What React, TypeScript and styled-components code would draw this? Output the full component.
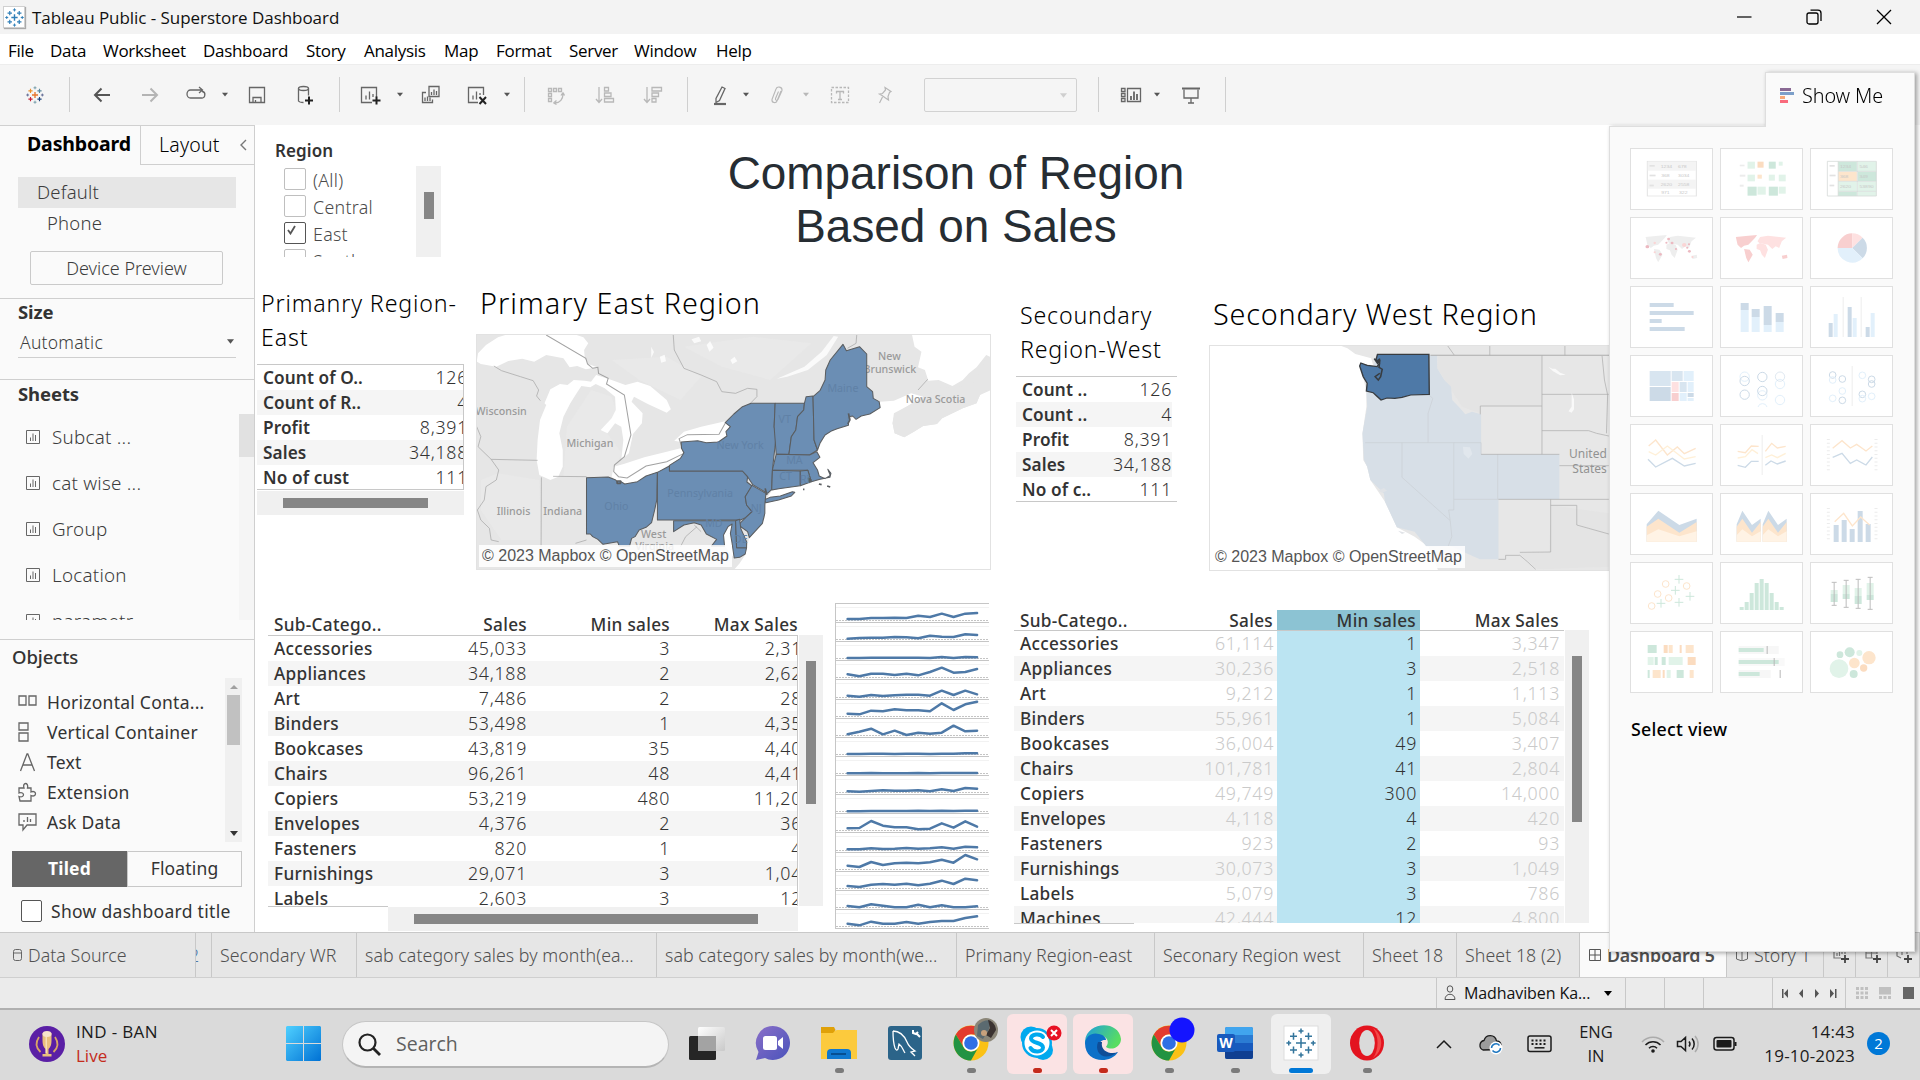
import React from "react";
import styled, { createGlobalStyle } from "styled-components";

const UI = '"Open Sans", "Noto Sans", sans-serif';
const TAB = '"Noto Sans", "Open Sans", sans-serif';
const ARIAL = '"Liberation Sans", Arial, sans-serif';

const Global = createGlobalStyle`
  *, *::before, *::after { box-sizing: border-box; }
  html, body { margin: 0; padding: 0; overflow: hidden; background: #fff; }
  body { font-family: ${UI}; color: #333; }
  svg { display: block; flex: none; }
`;

const Screen = styled.div`
  position: relative;
  width: 1920px;
  height: 1080px;
  display: flex;
  flex-direction: column;
  overflow: hidden;
  background: #fff;
`;

/* ---------- window chrome ---------- */

const TitleBar = styled.header`
  height: 34px;
  flex: none;
  display: flex;
  align-items: center;
  background: #f3f3f3;
  padding-left: 3px;
`;
const AppBadge = styled.span`
  width: 22px;
  height: 22px;
  background: #fff;
  border: 1px solid #d0d0d0;
  box-shadow: 1px 1px 1px #aaa;
  display: grid;
  place-items: center;
`;
const WindowTitle = styled.span`
  flex: 1;
  margin-left: 7px;
  font: 400 17px/35px ${UI};
  letter-spacing: -0.05px;
  color: #111;
`;
const WindowButtons = styled.div`
  display: flex;
  gap: 54px;
  margin-right: 28px;
`;

const MenuBar = styled.nav`
  height: 30px;
  flex: none;
  display: flex;
  background: #fff;
  padding-left: 8px;
`;
const MenuItem = styled.span<{ $w: number; $ls?: number }>`
  width: ${(p) => p.$w}px;
  flex: none;
  font: 400 17px/34px ${UI};
  letter-spacing: ${(p) => p.$ls ?? -0.3}px;
  color: #000;
  white-space: nowrap;
`;

const Toolbar = styled.div`
  height: 61px;
  flex: none;
  display: flex;
  align-items: center;
  background: #f5f5f5;
  border-top: 1px solid #ededed;
  padding-bottom: 1px;
`;
const Slot = styled.span<{ $gap: number; $w?: number }>`
  width: ${(p) => p.$w ?? 24}px;
  height: 24px;
  flex: none;
  margin-left: ${(p) => p.$gap}px;
  display: grid;
  place-items: center;
`;
const Divider = styled.span<{ $gap: number }>`
  width: 1px;
  height: 35px;
  flex: none;
  background: #cfcfcf;
  margin-left: ${(p) => p.$gap}px;
`;
const Combo = styled.span`
  width: 153px;
  height: 34px;
  flex: none;
  margin-left: 27px;
  margin-top: 1px;
  border: 1px solid #d2d2d2;
  border-radius: 2px;
  display: flex;
  align-items: center;
  justify-content: flex-end;
  padding-right: 9px;
`;

/* ---------- workspace ---------- */

const Workspace = styled.div`
  height: 807px;
  flex: none;
  display: flex;
`;
const Sidebar = styled.aside`
  width: 255px;
  flex: none;
  display: flex;
  flex-direction: column;
  background: #fafafa;
  border-top: 1px solid #d0d0d0;
  border-right: 1px solid #cfcfcf;
`;
const SideTabs = styled.div`
  height: 39px;
  flex: none;
  display: flex;
`;
const SideTab = styled.div<{ $active?: boolean }>`
  width: ${(p) => (p.$active ? 140 : 114)}px;
  display: flex;
  align-items: center;
  justify-content: space-between;
  padding: 0 7px ${(p) => (p.$active ? 3 : 1)}px ${(p) => (p.$active ? 27 : 18)}px;
  font: ${(p) => (p.$active ? 700 : 350)} 19.5px/36px ${TAB};
  letter-spacing: ${(p) => (p.$active ? -0.15 : 0.2)}px;
  color: #000;
  ${(p) => !p.$active && "border-left: 1px solid #cfcfcf; border-bottom: 1px solid #cfcfcf;"}
`;
const DeviceSection = styled.section`
  height: 134px;
  flex: none;
  display: flex;
  flex-direction: column;
  padding: 12px 18px 0 18px;
  border-bottom: 1px solid #cfcfcf;
`;
const DeviceRow = styled.div<{ $selected?: boolean }>`
  height: 31px;
  flex: none;
  background: ${(p) => (p.$selected ? "#e6e6e6" : "transparent")};
  padding-left: ${(p) => (p.$selected ? 19 : 29)}px;
  font: 350 18.5px/30px ${TAB};
  letter-spacing: 0.2px;
  color: #3c3c3c;
`;
const PreviewButton = styled.button`
  height: 34px;
  width: 193px;
  margin: 12px 0 0 12px;
  padding: 0;
  border: 1px solid #cacaca;
  border-radius: 2px;
  background: #fafafa;
  font: 350 18px/32px ${TAB};
  letter-spacing: 0;
  color: #3c3c3c;
`;
const SizeSection = styled.section`
  height: 81px;
  flex: none;
  padding: 0 18px;
  border-bottom: 1px solid #cfcfcf;
`;
const SideHeading = styled.h3<{ $lh: number; $mb: number; $w?: number }>`
  margin: 0 0 ${(p) => p.$mb}px;
  font: ${(p) => p.$w ?? 700} 18.5px/${(p) => p.$lh}px ${TAB};
  letter-spacing: -0.1px;
  color: #333;
`;
const SizeSelect = styled.div`
  height: 30px;
  border-bottom: 1px solid #cfcfcf;
  display: flex;
  align-items: center;
  justify-content: space-between;
  padding: 0 2px 2px;
  font: 350 17.5px/28px ${TAB};
  letter-spacing: 0.25px;
  color: #3c3c3c;
`;
const SheetsSection = styled.section`
  height: 260px;
  flex: none;
  border-bottom: 1px solid #cfcfcf;
  & > h3 { padding-left: 18px; }
`;
const SheetScroller = styled.div`
  height: 206px;
  display: flex;
  overflow: hidden;
`;
const SheetList = styled.div`
  flex: 1;
  display: flex;
  flex-direction: column;
`;
const SheetRow = styled.div`
  height: 46px;
  flex: none;
  display: flex;
  align-items: center;
  gap: 12px;
  padding-left: 26px;
  font: 350 18.8px/46px ${TAB};
  letter-spacing: 0.25px;
  color: #3c3c3c;
`;
const SheetTrack = styled.div`
  width: 15px;
  background: #f5f5f5;
  &::before { content: ""; display: block; height: 43px; background: #e1e1e1; }
`;
const ObjectsSection = styled.section`
  flex: 1;
  padding-left: 12px;
  display: flex;
  flex-direction: column;
`;
const ObjectsBody = styled.div`
  height: 164px;
  width: 230px;
  display: flex;
`;
const ObjectList = styled.div`
  flex: 1;
  padding-top: 9px;
`;
const ObjectRow = styled.div`
  height: 30px;
  display: flex;
  align-items: center;
  gap: 9px;
  padding-left: 5px;
  font: 400 17.5px/30px ${TAB};
  letter-spacing: 0.25px;
  color: #333;
  white-space: nowrap;
`;
const ObjectTrack = styled.div`
  width: 17px;
  background: #f0f0f0;
  display: flex;
  flex-direction: column;
  align-items: center;
  padding: 7px 0 6px;
`;
const ObjectThumb = styled.div`
  width: 13px;
  height: 50px;
  margin-top: 6px;
  margin-bottom: auto;
  background: #c1c1c1;
`;
const Toggle = styled.div`
  width: 230px;
  height: 36px;
  margin-top: 9px;
  display: flex;
`;
const ToggleItem = styled.span<{ $on?: boolean }>`
  flex: 1;
  text-align: center;
  background: ${(p) => (p.$on ? "#666" : "#fafafa")};
  border: 1px solid ${(p) => (p.$on ? "#666" : "#c8c8c8")};
  color: ${(p) => (p.$on ? "#fff" : "#333")};
  font: ${(p) => (p.$on ? 700 : 400)} 17.5px/33px ${TAB};
  letter-spacing: 0.15px;
`;
const TitleCheck = styled.label`
  margin: 13px 0 0 9px;
  display: flex;
  align-items: center;
  gap: 9px;
  font: 400 17.5px/22px ${TAB};
  letter-spacing: 0.3px;
  color: #333;
  white-space: nowrap;
`;
const Box = styled.span<{ $size?: number; $on?: boolean }>`
  width: ${(p) => p.$size ?? 22}px;
  height: 22px;
  flex: none;
  background: #fff;
  border: 1px solid ${(p) => (p.$on ? "#555" : "#bfbfbf")};
  border-radius: 2px;
`;

/* ---------- dashboard ---------- */

const Dashboard = styled.main`
  flex: 1;
  display: flex;
  flex-direction: column;
  background: #fff;
  overflow: hidden;
`;
const TopZone = styled.div`
  height: 160px;
  flex: none;
  display: flex;
`;
const Filter = styled.div`
  width: 186px;
  margin-left: 20px;
  padding-top: 14px;
`;
const FilterTitle = styled.div`
  font: 600 17px/24px ${TAB};
  letter-spacing: 0.1px;
  color: #333;
`;
const FilterBody = styled.div`
  height: 91px;
  margin-top: 3px;
  width: 166px;
  display: flex;
  justify-content: space-between;
  overflow: hidden;
`;
const FilterList = styled.div`
  padding-left: 9px;
  padding-top: 2px;
`;
const FilterRow = styled.div`
  height: 27px;
  display: flex;
  gap: 7px;
  font: 350 17.8px/25px ${TAB};
  letter-spacing: 0.3px;
  color: #4a4a4a;
  svg { margin: 2px; }
`;
const VTrack = styled.div<{ $w: number; $top: number; $len: number }>`
  width: ${(p) => p.$w}px;
  flex: none;
  background: #f0f0f0;
  display: flex;
  justify-content: center;
  padding-top: ${(p) => p.$top}px;
  &::before { content: ""; width: 10px; height: ${(p) => p.$len}px; background: #868686; }
`;
const HTrack = styled.div<{ $w: number; $ml?: number; $left: number; $len: number }>`
  width: ${(p) => p.$w}px;
  height: 24px;
  margin-left: ${(p) => p.$ml ?? 0}px;
  background: #f0f0f0;
  padding: 7px 0 0 ${(p) => p.$left}px;
  &::before { content: ""; display: block; width: ${(p) => p.$len}px; height: 10px; background: #868686; }
`;
const DashTitle = styled.h1`
  margin: 22px 0 0 180px;
  width: 630px;
  text-align: center;
  font: 400 45.9px/53px ${ARIAL};
  color: #262d33;
`;
const MiddleZone = styled.div`
  height: 305px;
  flex: none;
  display: flex;
`;
const KpiPanel = styled.div<{ $w: number; $pl: number; $top: number }>`
  width: ${(p) => p.$w}px;
  flex: none;
  padding-left: ${(p) => p.$pl}px;
  padding-top: ${(p) => p.$top}px;
`;
const KpiTitle = styled.h2<{ $pl: number; $ls: number; $mb: number }>`
  margin: 0 0 ${(p) => p.$mb}px;
  padding-left: ${(p) => p.$pl}px;
  font: 300 23.2px/34px ${TAB};
  letter-spacing: ${(p) => p.$ls}px;
  color: #000;
  white-space: nowrap;
`;
const KpiTable = styled.div<{ $w: number; $clipped?: boolean }>`
  width: ${(p) => p.$w}px;
  height: 126px;
  overflow: hidden;
  border-top: 1px solid #c8c8c8;
  border-bottom: 1px solid #c8c8c8;
  border-right: ${(p) => (p.$clipped ? "1px solid #c8c8c8" : "0")};
  margin-bottom: 1px;
`;
const KpiRow = styled.div<{ $over: number }>`
  height: 25px;
  display: flex;
  justify-content: space-between;
  padding-left: 6px;
  margin-right: ${(p) => -p.$over}px;
  font: 300 17.8px/25px ${TAB};
  letter-spacing: 0.7px;
  color: #333;
  &:nth-child(even) { background: #f5f5f5; }
  b { font-weight: 600; font-size: 17.2px; letter-spacing: 0.1px; }
`;
const MapPanel = styled.div<{ $w: number; $top: number }>`
  width: ${(p) => p.$w}px;
  flex: none;
  padding-top: ${(p) => p.$top}px;
`;
const MapTitle = styled.h2<{ $ls: number; $mb: number; $pl: number }>`
  margin: 0 0 ${(p) => p.$mb}px;
  padding-left: ${(p) => p.$pl}px;
  font: 350 28.8px/36px ${TAB};
  letter-spacing: ${(p) => p.$ls}px;
  color: #000;
  white-space: nowrap;
`;
const MapFrame = styled.div<{ $h: number }>`
  position: relative;
  height: ${(p) => p.$h}px;
  border: 1px solid #e2e2e2;
  overflow: hidden;
`;
const Attribution = styled.div`
  position: absolute;
  left: 2px;
  bottom: 2px;
  width: 253px;
  height: 22px;
  padding-left: 3px;
  background: rgba(255, 255, 255, 0.85);
  font: 400 16px/22px ${ARIAL};
  color: #555;
  white-space: nowrap;
`;
const BottomZone = styled.div`
  height: 342px;
  flex: none;
  display: flex;
`;
const DataPanel = styled.div<{ $w: number; $ml: number; $top: number }>`
  width: ${(p) => p.$w}px;
  flex: none;
  margin-left: ${(p) => p.$ml}px;
  padding-top: ${(p) => p.$top}px;
`;
const HeadRow = styled.div<{ $cols: string; $h: number }>`
  display: grid;
  grid-template-columns: ${(p) => p.$cols};
  height: ${(p) => p.$h}px;
  font: 500 17.2px/22px ${TAB};
  letter-spacing: 0.3px;
  color: #333;
`;
const HeadCell = styled.span<{ $num?: boolean; $on?: boolean; $pr?: number }>`
  text-align: ${(p) => (p.$num ? "right" : "left")};
  padding: 0 ${(p) => p.$pr ?? 0}px 0 ${(p) => (p.$num ? 0 : 6)}px;
  background: ${(p) => (p.$on ? "#8cc3d3" : "transparent")};
  white-space: nowrap;
`;
const DataBody = styled.div<{ $h: number }>`
  display: flex;
  gap: 1px;
  height: ${(p) => p.$h}px;
`;
const Rows = styled.div<{ $w: number; $edge?: boolean }>`
  width: ${(p) => p.$w}px;
  flex: none;
  overflow: hidden;
  border-top: 1px solid #c8c8c8;
  ${(p) => p.$edge && "border-right: 1px solid #c8c8c8;"}
`;
const DataRow = styled.div<{ $cols: string }>`
  height: 25px;
  display: grid;
  grid-template-columns: ${(p) => p.$cols};
  font: 300 17.8px/25px ${TAB};
  letter-spacing: 0.7px;
  &:nth-child(even) { background: #f5f5f5; }
`;
const Name = styled.span`
  padding-left: 6px;
  font-weight: 500;
  font-size: 17.2px;
  color: #333;
  letter-spacing: 0.3px;
`;
const Num = styled.span<{ $dim?: boolean; $on?: boolean; $pr?: number }>`
  text-align: right;
  padding-right: ${(p) => p.$pr ?? 0}px;
  color: ${(p) => (p.$dim ? "#cacaca" : "#333")};
  background: ${(p) => (p.$on ? "#bbe4f2" : "transparent")};
`;
const FootLine = styled.div<{ $w: number }>`
  width: ${(p) => p.$w}px;
  height: 1px;
  background: #c8c8c8;
`;

/* ---------- show me ---------- */

const ShowMe = styled.aside`
  position: absolute;
  left: 1609px;
  top: 72px;
  width: 306px;
  height: 880px;
  display: flex;
  flex-direction: column;
  filter: drop-shadow(2px 1px 2px rgba(0, 0, 0, 0.35));
`;
const ShowMeTab = styled.div`
  width: 150px;
  height: 55px;
  flex: none;
  align-self: flex-end;
  background: #fafafa;
  border: 1px solid #dedede;
  border-bottom: 0;
  margin-bottom: -1px;
  z-index: 1;
  display: flex;
  align-items: center;
  gap: 8px;
  padding: 0 0 9px 14px;
  font: 350 19.8px/44px ${TAB};
  letter-spacing: -0.1px;
  color: #000;
  white-space: nowrap;
`;
const ShowMeBody = styled.div`
  flex: 1;
  background: #fafafa;
  border: 1px solid #dedede;
  padding: 21px 0 0 20px;
`;
const CardGrid = styled.div`
  display: grid;
  grid-template-columns: repeat(3, 83px);
  grid-auto-rows: 62px;
  gap: 7px;
`;
const Card = styled.div`
  background: #fff;
  border: 1px solid #e0e0e0;
  svg { margin: -1px; }
`;
const SelectView = styled.div`
  margin-top: 22px;
  padding-left: 1px;
  font: 500 17.8px/28px ${TAB};
  letter-spacing: 0.25px;
  color: #000;
`;

/* ---------- bottom bars ---------- */

const TabStrip = styled.div`
  height: 46px;
  flex: none;
  display: flex;
  background: #e6e6e6;
  border-top: 1px solid #c8c8c8;
  border-bottom: 1px solid #cfcfcf;
`;
const SheetTab = styled.div<{ $w: number; $pl: number; $active?: boolean; $ls?: number }>`
  width: ${(p) => p.$w}px;
  flex: none;
  display: flex;
  align-items: center;
  overflow: hidden;
  border-right: 1px solid #c8c8c8;
  padding-left: ${(p) => p.$pl}px;
  gap: 6px;
  background: ${(p) => (p.$active ? "#fafafa" : "transparent")};
  font: ${(p) => (p.$active ? 600 : 350)} 17.8px/44px ${TAB};
  letter-spacing: ${(p) => p.$ls ?? 0.05}px;
  color: #505050;
  white-space: nowrap;
`;
const ScrolledLabel = styled.span`
  margin-left: -7px;
  color: #4e79a7;
`;
const StatusBar = styled.div`
  height: 32px;
  flex: none;
  display: flex;
  justify-content: flex-end;
  background: #ebebeb;
  border-bottom: 2px solid #b0b0b0;
`;
const StatusCell = styled.div<{ $w: number }>`
  width: ${(p) => p.$w}px;
  border-left: 1px solid #c8c8c8;
  display: flex;
  align-items: center;
  gap: 8px;
  padding-left: 7px;
  font: 400 16px/29px ${UI};
  letter-spacing: -0.1px;
  color: #111;
  white-space: nowrap;
`;
const UserName = styled.span`
  width: 132px;
`;

const Taskbar = styled.footer`
  height: 70px;
  flex: none;
  display: flex;
  align-items: center;
  background: #dadada;
  padding-bottom: 3px;
`;
const Widget = styled.div`
  width: 286px;
  padding-left: 29px;
  display: flex;
  align-items: center;
  gap: 11px;
  font: 400 17px/24px ${UI};
  letter-spacing: 0.35px;
  color: #1b1b1b;
`;
const Live = styled.div`
  color: #c42b1c;
  letter-spacing: 0;
`;
const SearchBox = styled.div`
  width: 327px;
  height: 47px;
  margin: 2px 0 0 21px;
  border: 1px solid #c6c6c6;
  border-bottom: 2px solid #b4b4b4;
  border-radius: 24px;
  background: #f4f4f4;
  display: flex;
  align-items: center;
  gap: 15px;
  padding-left: 15px;
  font: 400 19.5px/40px ${UI};
  color: #5f5f5f;
`;
const Apps = styled.div`
  display: flex;
  gap: 6px;
  align-self: flex-start;
  margin: 4px 0 0 8px;
`;
const AppSlot = styled.div<{ $bg?: string }>`
  width: 60px;
  height: 60px;
  border-radius: 6px;
  background: ${(p) => p.$bg ?? "transparent"};
  display: flex;
  flex-direction: column;
  align-items: center;
  padding-top: 11px;
  svg { overflow: visible; }
`;
const Pip = styled.span<{ $c: string; $w?: number }>`
  width: ${(p) => p.$w ?? 9}px;
  height: 5px;
  margin-top: 7px;
  border-radius: 3px;
  background: ${(p) => p.$c};
`;
const Tray = styled.div`
  margin-left: auto;
  display: flex;
  align-items: center;
  padding-right: 30px;
`;
const TrayText = styled.div<{ $w: number; $right?: boolean }>`
  width: ${(p) => p.$w}px;
  text-align: ${(p) => (p.$right ? "right" : "center")};
  font: 400 ${(p) => (p.$right ? 17 : 16.5)}px/24px ${UI};
  letter-spacing: ${(p) => (p.$right ? 0.2 : 0)}px;
  color: #1b1b1b;
  white-space: nowrap;
`;
const Count = styled.span`
  width: 23px;
  height: 23px;
  margin-left: 12px;
  border-radius: 50%;
  background: #0078d7;
  color: #fff;
  text-align: center;
  font: 400 15px/22px ${UI};
`;
const TrayIcon = styled.span<{ $w: number }>`
  width: ${(p) => p.$w}px;
  display: grid;
  place-items: center;
`;

/* ---------- small drawings ---------- */

const Caret = ({ c = "#555", w = 7 }: { c?: string; w?: number }) => (
  <svg width={w} height={5} viewBox="0 0 8 5"><path d="M0 0h8L4 5z" fill={c} /></svg>
);

const plus = (x: number, y: number, r: number) => `M${x - r} ${y}h${2 * r}M${x} ${y - r}v${2 * r}`;

const TableauMark = ({ size, mono }: { size: number; mono?: boolean }) => {
  const b = "#2f7fb8";
  const c = (v: string) => (mono ? b : v);
  return (
    <svg width={size} height={size} viewBox="0 0 24 24" fill="none" strokeWidth={1.5}>
      <path d={plus(12, 12, 4)} stroke={c("#e8762c")} strokeWidth={1.8} />
      <path d={plus(6, 6.5, 2.8)} stroke={c("#eb912c")} />
      <path d={plus(18, 6.5, 2.8)} stroke={c("#59879b")} />
      <path d={plus(6, 17.5, 2.8)} stroke={c("#c72035")} />
      <path d={plus(18, 17.5, 2.8)} stroke={c("#1f457e")} />
      <path d={plus(12, 2.4, 2)} stroke={c("#7199a6")} strokeWidth={1.2} />
      <path d={plus(12, 21.6, 2)} stroke={c("#7199a6")} strokeWidth={1.2} />
      <path d={plus(2.2, 12, 1.9)} stroke={c("#5b6591")} strokeWidth={1.2} />
      <path d={plus(21.8, 12, 1.9)} stroke={c("#5b6591")} strokeWidth={1.2} />
    </svg>
  );
};

const Ic = ({ children, c = "#666", w = 1.3 }: { children: React.ReactNode; c?: string; w?: number }) => (
  <svg width={24} height={24} viewBox="0 0 24 24" fill="none" stroke={c} strokeWidth={w}>{children}</svg>
);

const ToolbarRow = () => (
  <Toolbar>
    <Slot $gap={25} $w={19}><TableauMark size={18} /></Slot>
    <Divider $gap={25} />
    <Slot $gap={20}><Ic c="#555" w={2}><path d="M20 12H5M11.5 5.5L5 12l6.500 6.500" /></Ic></Slot>
    <Slot $gap={24}><Ic c="#b4b4b4" w={2}><path d="M4 12h15M12.500 5.500L19 12l-6.500 6.500" /></Ic></Slot>
    <Slot $gap={22}><Ic><path d="M8 15H6.500a3.500 4 0 0 1 0-8H18M15 4l3.500 3L15 10M18 8.500h.5a3 3.300 0 0 1-1 6.500H8" /></Ic></Slot>
    <Slot $gap={13} $w={8}><Caret w={6} /></Slot>
    <Slot $gap={16}><Ic><path d="M4.500 4.500h15v15h-15zM8 19.500v-5h8v5M10.500 17v2.500" /></Ic></Slot>
    <Slot $gap={24}><Ic><ellipse cx="10.500" cy="5.500" rx="5" ry="2" /><path d="M5.500 5.500v12.500c1 1.500 3 1.500 5 1.500M15.500 5.500v7" /><path d="M12 17.500h8M16 13.500v8" stroke="#222" strokeWidth="2" /></Ic></Slot>
    <Divider $gap={22} />
    <Slot $gap={19}><Ic><path d="M13 19.500H2.500v-15h15V14M7 16.500v-4M10.500 16.500V8.500M14 14v-3" /><path d="M13.500 17.500h8M17.500 13.500v8" stroke="#222" strokeWidth="2" /></Ic></Slot>
    <Slot $gap={13} $w={8}><Caret w={6} /></Slot>
    <Slot $gap={15}><Ic><path d="M10 3.500h10v10H10zM12.500 12V9M15 12V6.500M17.500 12V8M7 9.500H3.500v10h10V16.500M6 18v-3.500M8.500 18v-4.500M11 18v-3.500" /></Ic></Slot>
    <Slot $gap={23}><Ic><path d="M12 19.500H2.500v-15h15V12M7 16.500v-4M10.500 16.500V8.500M14 12V10" /><path d="M13.500 14l6.500 7M20 14l-6.500 7" stroke="#222" strokeWidth="2" /></Ic></Slot>
    <Slot $gap={13} $w={8}><Caret w={6} /></Slot>
    <Divider $gap={13} />
    <Slot $gap={19}><Ic c="#b8b8b8"><path d="M4.500 5.500h3v3h-3zM9.500 5.500h3v3h-3zM14.500 5.500h3v3h-3zM4.500 10.500h3v3h-3zM4.500 15.500h3v3h-3zM11 20c5 0 8-4 8-9M9.500 20l3-2.500M9.500 20l3 1.500M19 9.500l-2 3M19 9.500l1.500 3" /></Ic></Slot>
    <Slot $gap={25}><Ic c="#b8b8b8"><path d="M6 4v15M3 16l3 3.500L9 16M11.500 4.500h4v3.500h-4zM11.500 10h6.500v3.500h-6.500zM11.500 15.500h9v3.500h-9z" /></Ic></Slot>
    <Slot $gap={24}><Ic c="#b8b8b8"><path d="M6 4v15M3 16l3 3.500L9 16M11 4.500h9.500v3.500H11zM11 10h6.500v3.500H11zM11 15.500h4v3.500h-4z" /></Ic></Slot>
    <Divider $gap={22} />
    <Slot $gap={20}><Ic><path d="M14 4l3 1.500-5.500 12-3.500 2 0-4z" /><path d="M6 21h12" strokeWidth="2.200" /></Ic></Slot>
    <Slot $gap={10} $w={8}><Caret w={6} /></Slot>
    <Slot $gap={15}><Ic c="#b8b8b8" w={1.1}><path d="M16 8l-4 10c-1 2.500-5.500 2-5-1.500l4-10.500c1-3 6.500-2.500 6 1.500l-4 9c-1 1.500-3 1-2.500-1l3-7" /></Ic></Slot>
    <Slot $gap={13} $w={8}><Caret c="#b8b8b8" w={6} /></Slot>
    <Slot $gap={18}><Ic c="#b8b8b8"><rect x="3.500" y="4.500" width="17" height="15" strokeDasharray="2.500 1.500" /><path d="M8 8.500h8M12 8.500v8M10 16.500h4M8.500 8v2.500M15.500 8v2.500" /></Ic></Slot>
    <Slot $gap={21}><Ic c="#b8b8b8" w={1.2}><path d="M12 4.500l6 4-1.500 1-1.500 4 .5 3.500-3-2-3.500-2.500L6.500 11l3-.5 3-3.500zM9.500 14l-3 6" /></Ic></Slot>
    <Combo><Caret c="#cfcfcf" /></Combo>
    <Divider $gap={21} />
    <Slot $gap={20}><Ic><path d="M2.500 5.500h3.500v3H2.500zM2.500 10.500h3.500v3H2.500zM2.500 15.500h3.500v3H2.500zM8.500 5.500h13v13h-13z" /><path d="M12 17v-4M15 17V8.500M18 17v-6" strokeWidth="1.800" /></Ic></Slot>
    <Slot $gap={10} $w={8}><Caret w={6} /></Slot>
    <Slot $gap={18}><Ic><path d="M5 6.500v8.500h14V6.500M12 15v5M9 20h6" /><path d="M3 5.500h18" strokeWidth="2" /></Ic></Slot>
    <Divider $gap={22} />
  </Toolbar>
);

const SheetIcon = () => (
  <svg width={14} height={14} viewBox="0 0 14 14" fill="none" stroke="#666" strokeWidth={1}>
    <path d="M.5 .5h13v13H.5zM4.500 11V7.500M7 11V3.500M9.500 11V5" />
  </svg>
);

const ObjIcon = ({ d }: { d: string }) => (
  <svg width={21} height={22} viewBox="0 0 21 22" fill="none" stroke="#666" strokeWidth={1.3}><path d={d} /></svg>
);

const OBJECTS: [string, string][] = [
  ["Horizontal Conta...", "M2 5h7v9H2zM12 5h7v9h-7z"],
  ["Vertical Container", "M2 2h9v7H2zM2 12h9v8H2z"],
  ["Text", "M3.500 20L10 3h.8L17.500 20M6 14h9"],
  ["Extension", "M2 7h5c-2-6 5-6 3.500 0H14v4c6-2.500 6 6 0 3.500V20H3l-1-4.500c6 2 6-5.500 0-3.500z"],
  ["Ask Data", "M2 3h17v11H10l-4 5v-5H2zM7 11V9M10.500 11V6M13.500 11V8"],
];

const Side = () => (
  <Sidebar>
    <SideTabs>
      <SideTab $active>Dashboard</SideTab>
      <SideTab>
        Layout
        <svg width={7} height={12} viewBox="0 0 7 12" fill="none" stroke="#777" strokeWidth={1.4}><path d="M6 1L1 6l5 5" /></svg>
      </SideTab>
    </SideTabs>
    <DeviceSection>
      <DeviceRow $selected>Default</DeviceRow>
      <DeviceRow>Phone</DeviceRow>
      <PreviewButton>Device Preview</PreviewButton>
    </DeviceSection>
    <SizeSection>
      <SideHeading $lh={26} $mb={3}>Size</SideHeading>
      <SizeSelect>Automatic<Caret /></SizeSelect>
    </SizeSection>
    <SheetsSection>
      <SideHeading $lh={27} $mb={7}>Sheets</SideHeading>
      <SheetScroller>
        <SheetList>
          {["Subcat ...", "cat wise ...", "Group", "Location", "parametr"].map((s) => (
            <SheetRow key={s}><SheetIcon />{s}</SheetRow>
          ))}
        </SheetList>
        <SheetTrack />
      </SheetScroller>
    </SheetsSection>
    <ObjectsSection>
      <SideHeading $lh={34} $mb={4} $w={500}>Objects</SideHeading>
      <ObjectsBody>
        <ObjectList>
          {OBJECTS.map(([t, d]) => <ObjectRow key={t}><ObjIcon d={d} />{t}</ObjectRow>)}
        </ObjectList>
        <ObjectTrack>
          <svg width={8} height={4} viewBox="0 0 8 4"><path d="M0 4h8L4 0z" fill="#a0a0a0" /></svg>
          <ObjectThumb />
          <Caret c="#333" w={8} />
        </ObjectTrack>
      </ObjectsBody>
      <Toggle><ToggleItem $on>Tiled</ToggleItem><ToggleItem>Floating</ToggleItem></Toggle>
      <TitleCheck><Box $on $size={21} />Show dashboard title</TitleCheck>
    </ObjectsSection>
  </Sidebar>
);

/* ---------- maps ---------- */

const EAST_STATES = [
  "M367 593L430 591 452 600 458 608 466 604 478 612 515 605 540 588 573 577 571 660 565 690 556 728 540 742 520 750 508 770 498 775 492 798 462 798 457 785 440 788 415 793 400 778 385 770 378 762 367 762Z",
  "M573 577L608 558 608 573 820 573 835 590 833 606 848 618 828 650 832 675 848 695 830 712 815 720 573 720Z",
  "M608 573L608 556 640 535 650 518 643 505 642 486 690 482 715 488 750 486 775 468 772 455 785 440 770 428 795 402 820 380 845 370 915 370 912 440 918 468 907 570 905 628 893 640 888 637 850 614 835 590 820 573Z",
  "M888 668L882 660 900 652 930 648 965 635 972 637 962 648 925 660Z",
  "M915 370L1000 370 998 390 980 410 975 450 962 470 955 523 918 523 912 440Z",
  "M1000 370L1005 350 1025 348 1028 480 1038 510 1015 525 955 523 962 470 975 450 980 410 998 390Z",
  "M1025 350L1045 332 1060 300 1062 270 1075 240 1112 193 1122 212 1160 200 1181 222 1181 320 1198 335 1200 355 1217 365 1220 383 1190 402 1165 408 1150 418 1140 408 1128 410 1128 436 1095 446 1080 452 1060 465 1045 490 1038 510 1028 480Z",
  "M918 523L1015 525 1036 515 1045 532 1025 548 1038 570 1043 588 1060 596 1075 586 1068 568 1077 580 1074 592 1045 598 1020 605 1010 571 907 570Z",
  "M907 571L988 573 988 617 925 626 905 630Z",
  "M988 573L1010 571 1020 605 988 617Z",
  "M848 616L888 640 885 675 885 700 878 730 840 773 835 755 808 735 830 712 848 695 832 675 828 650Z",
  "M620 722L800 722 803 803 832 803 828 822 812 832 796 834 790 790 785 760 790 732 778 740 765 765 768 798 730 798 745 778 715 762 700 735 680 728 650 735 620 755Z",
  "M800 722L812 718 815 745 832 785 832 803 803 803Z",
];
const LABEL_LAND = "#9a9a9a";
const LABEL_STATE = "#6081a6";
const EAST_LABELS: [string, number, number, string][] = [
  ["Wisconsin", 119, 405, LABEL_LAND], ["Michigan", 377, 500, LABEL_LAND], ["Illinois", 155, 705, LABEL_LAND],
  ["Indiana", 298, 705, LABEL_LAND], ["West", 562, 774, LABEL_LAND], ["Virginia", 565, 809, LABEL_LAND],
  ["New", 1247, 240, LABEL_LAND], ["Brunswick", 1248, 278, LABEL_LAND], ["Nova Scotia", 1381, 370, LABEL_LAND],
  ["Maine", 1112, 335, LABEL_STATE], ["VT", 943, 429, LABEL_STATE], ["New York", 813, 507, LABEL_STATE],
  ["MA", 971, 551, LABEL_STATE], ["CT", 945, 600, LABEL_STATE], ["RI", 1002, 609, LABEL_STATE],
  ["Pennsylvania", 697, 650, LABEL_STATE], ["Ohio", 454, 689, LABEL_STATE], ["NJ", 860, 695, LABEL_STATE],
  ["MD", 737, 742, LABEL_STATE], ["DE", 815, 790, LABEL_STATE],
];

const MapSvg = styled.svg`
  margin: -1px;
`;

const EastMap = () => (
  <MapSvg width={515} height={236} viewBox="46 162 1496 708" preserveAspectRatio="none">
    <rect x="46" y="162" width="1496" height="708" fill="#e6e6e6" />
    <g fill="#e9e9e9">
      <path d="M380 330L440 350 455 400 420 450 470 520 440 590 300 588 310 440Z" />
      <path d="M60 600L110 580 230 600 235 780 120 780 60 690Z" />
      <path d="M650 200L850 170 1020 190 900 300 760 260Z" />
      <path d="M440 240L600 230 700 290 640 360 520 300Z" />
    </g>
    <g fill="#fff">
      <path d="M48 245L52 220 75 195 110 172 140 162 330 162 358 172 372 190 360 210 362 235 372 252 398 262 365 268 340 258 318 262 300 235 250 225 215 245 180 236 140 243 105 260 60 252Z" />
      <path d="M362 302L330 300 312 315 290 312 262 328 245 370 250 375 232 420 225 480 222 540 230 585 262 600 285 590 298 560 298 510 288 460 300 410 320 370 335 345 352 318 378 322 400 308Z" />
      <path d="M395 285L440 300 480 315 515 305 552 318 600 360 612 388 600 398 545 372 505 350 498 365 530 400 528 430 502 462 490 520 468 540 474 480 468 440 450 430 428 460 408 450 440 415 452 390 450 350 420 325 380 305Z" />
      <path d="M440 590L446 560 475 552 535 532 600 515 640 505 652 518 640 535 575 575 540 588 515 605 478 612 455 604Z" />
      <path d="M622 482L650 455 700 440 770 424 785 440 776 468 750 486 715 488 690 482 645 487Z" />
      <path d="M1312 162L1542 162 1542 232 1528 225 1500 262 1478 280 1460 300 1430 318 1390 300 1360 302 1350 270 1330 262 1340 215 1320 200Z" />
      <path d="M1542 330L1510 345 1500 370 1460 385 1400 415 1385 432 1345 438 1318 455 1290 472 1262 460 1256 430 1260 400 1300 378 1345 350 1310 340 1260 362 1220 365 1220 383 1190 402 1140 412 1095 446 1060 465 1038 512 1045 532 1028 548 1043 588 1062 596 1020 606 905 632 888 660 885 715 840 773 832 803 828 825 812 850 795 870 1542 870Z" />
      <path d="M920 296L1000 260 1050 215 1085 168 1098 170 1065 225 1010 270 950 290Z" opacity=".8" />
      <path d="M775 722L762 765 768 798 796 834 800 760 788 735Z" />
      <path d="M672 178l22-8 6 14-20 6zM716 195l10-12 10 20-12 12zM785 240l12-10 8 14-14 8zM555 200l8 16-8 18zM580 230l14-6 4 20-14 4z" opacity=".8" />
    </g>
    <path d="M1300 378L1345 350 1400 322 1470 320 1500 300 1528 232 1542 235 1542 320 1510 345 1500 370 1460 385 1400 415 1385 432 1345 438 1318 455 1290 472 1262 460 1256 430 1262 402Z" fill="#e6e6e6" />
    <g fill="none" stroke="#a2a2a2" strokeWidth={1}>
      <path d="M250 165L365 235 370 252 385 265 400 262 402 280 430 295 425 312 477 345 496 465 477 530 448 555 446 575 460 590 485 594 540 558 600 545 650 520 636 476 660 464 752 463 770 430" strokeWidth={3} />
      <path d="M98 258L120 272 175 290 212 302 228 330 222 348 233 362M48 440L60 470 52 500 90 538 225 541M90 538L112 570 105 600 75 620 70 660 50 690 60 720 85 745 90 780 112 785M236 592L235 800M270 589L367 590M335 790L367 780M619 165L622 210 650 265 700 285 745 305 760 335 800 340 835 325 862 328 862 350 845 368M1152 165L1150 190 1125 205M1358 298L1330 330M688 740L655 770 640 800M680 735L700 755" strokeWidth={2} />
    </g>
    <g fontFamily='"Noto Sans", sans-serif' fontSize={31} textAnchor="middle" fontWeight={500}>
      {EAST_LABELS.slice(0, 9).map(([t, x, y, c]) => <text key={t} x={x} y={y} fill={c}>{t}</text>)}
    </g>
    <g fill="#6b8eb4" stroke="#5a5d60" strokeWidth={3} strokeLinejoin="round">
      {EAST_STATES.map((d) => <path key={d} d={d} />)}
      <path d="M456 603h10v7h-10zM1012 595l6 4-4 8zM886 625l5 20M1042 612l8 2M1066 618l9 3M996 628l4 0M1128 400l4 20-6 12" strokeWidth={5} />
    </g>
    <g fontFamily='"Noto Sans", sans-serif' fontSize={31} textAnchor="middle">
      {EAST_LABELS.slice(9).map(([t, x, y, c]) => <text key={t} x={x} y={y} fill={c}>{t}</text>)}
    </g>
  </MapSvg>
);

const WestMap = () => (
  <MapSvg width={401} height={226} viewBox="530 195 1014 678" preserveAspectRatio="none">
    <rect x="530" y="195" width="1014" height="678" fill="#fff" />
    <path d="M858 195L1544 195 1544 873 1110 873 1085 800 1050 770 1005 742 975 665 938 600 930 560 920 540 918 460 928 380 928 335 912 250 945 256 940 235 900 222 880 205Z" fill="#e7e7e7" />
    <path d="M1110 226L1370 226 1370 378 1216 378 1216 400 1170 380 1107 265ZM1395 676L1541 700 1541 860 1360 868 1316 820 1390 815Z" fill="#e4e4e4" />
    <path d="M928 335L930 380 918 460 922 540 930 560 938 600 972 640 975 665 1005 742 1050 755 1080 800 1140 798 1215 838 1262 838 1262 658 1416 658 1416 523 1218 523 1218 403 1195 395 1178 403 1165 385 1145 360 1142 320 1125 300 1107 265 1107 226 955 224Z" fill="#d7dfe7" />
    <g fill="none" stroke="#cbd0d5" strokeWidth={2}>
      <path d="M925 488H1218V523M1084 343L1096 355 1084 400 1084 488M1018 488V592L1140 722M1149 488V690L1136 690 1140 722 1144 770 1135 798M1149 658H1262M1260 523V658" />
    </g>
    <g fill="none" stroke="#adadad" strokeWidth={2}>
      <path d="M1090 226H1544" strokeWidth={3} />
      <path d="M1240 195V226M1430 195V226M1132 195L1150 225M1216 403V378H1372M1372 226V523M1218 523H1416M1372 343H1541M1372 452H1490L1510 460 1541 468M1524 228L1530 300 1538 345 1535 460M1416 557H1541M1262 658H1541M1394 658V816L1316 817M1394 676H1460V735L1490 745 1541 762M1262 838H1280V826H1316L1335 845 1356 868" />
    </g>
    <path d="M1388 260l10 6 8 0 12 12 14 6-14 2-18-12zM1447 338l6 20 0 30-6 10-8-4 8-14z" fill="#fff" opacity=".75" />
    <path d="M1172 500l18 2 6 20-10 14-12-14z" fill="#fff" opacity=".25" />
    <path d="M958 632l14-8 8 8-12 6zM1008 752l18 6-8 4zM1028 775l10 4M1048 780l6 12" fill="#e0e3e7" />
    <path d="M956 223L1086 223 1087 343 1040 345 1018 352 1000 355 980 354 965 360 954 348 945 338 928 333 930 310 920 290 911 258 914 249 930 256 955 260 961 250 952 240Z" fill="#4e79a7" stroke="#383c40" strokeWidth={3.500} />
    <path d="M962 240L960 262 968 268 964 290 958 300 950 290 962 280M948 236l8 6 6-6-6 14z" fill="none" stroke="#383c40" strokeWidth={4} />
    <g fontFamily='"Noto Sans", sans-serif' fontSize={36} fill="#929292" textAnchor="end">
      <text transform="translate(1536 533) scale(.843 1)">United</text>
      <text transform="translate(1536 579) scale(.843 1)">States</text>
    </g>
  </MapSvg>
);

/* ---------- data ---------- */

const EAST_ROWS = [
  ["Accessories", "45,033", "3", "2,31"], ["Appliances", "34,188", "2", "2,62"], ["Art", "7,486", "2", "28"],
  ["Binders", "53,498", "1", "4,35"], ["Bookcases", "43,819", "35", "4,40"], ["Chairs", "96,261", "48", "4,41"],
  ["Copiers", "53,219", "480", "11,20"], ["Envelopes", "4,376", "2", "36"], ["Fasteners", "820", "1", "4"],
  ["Furnishings", "29,071", "3", "1,04"], ["Labels", "2,603", "3", "12"],
];
const WEST_ROWS = [
  ["Accessories", "61,114", "1", "3,347"], ["Appliances", "30,236", "3", "2,518"], ["Art", "9,212", "1", "1,113"],
  ["Binders", "55,961", "1", "5,084"], ["Bookcases", "36,004", "49", "3,407"], ["Chairs", "101,781", "41", "2,804"],
  ["Copiers", "49,749", "300", "14,000"], ["Envelopes", "4,118", "4", "420"], ["Fasteners", "923", "2", "93"],
  ["Furnishings", "30,073", "3", "1,049"], ["Labels", "5,079", "3", "786"], ["Machines", "42,444", "12", "4,800"],
];
const KPI_EAST = [["Count of O..", "126"], ["Count of R..", "4"], ["Profit", "8,391"], ["Sales", "34,188"], ["No of cust", "111"]];
const KPI_WEST = [["Count ..", "126"], ["Count ..", "4"], ["Profit", "8,391"], ["Sales", "34,188"], ["No of c..", "111"]];

/* Vertical units are thirds of a pixel, measured down from the panel's top. */
const SPARK_LINES = [70, 127, 184, 241, 298, 358, 415, 472, 529, 586, 643, 700, 757, 817, 874, 931, 988, 1045];
const SPARKS = [
  [117, 117, 114, 114, 113, 114, 107, 111, 101, 111, 101, 99],
  [176, 174, 173, 173, 171, 172, 175, 167, 170, 171, 163, 165],
  [234, 234, 233, 233, 233, 233, 233, 234, 231, 234, 231, 232],
  [283, 289, 281, 281, 285, 281, 286, 276, 263, 278, 276, 267],
  [347, 350, 345, 348, 346, 344, 344, 347, 332, 345, 332, 343],
  [401, 403, 392, 394, 388, 391, 391, 394, 370, 390, 373, 365],
  [463, 455, 446, 463, 452, 465, 458, 461, 458, 437, 454, 452],
  [522, 522, 521, 521, 522, 521, 521, 522, 521, 521, 520, 520],
  [580, 580, 579, 580, 580, 580, 579, 580, 579, 579, 579, 579],
  [634, 635, 633, 631, 632, 632, 631, 634, 628, 633, 624, 626],
  [694, 694, 693, 693, 693, 693, 692, 693, 692, 693, 692, 692],
  [745, 744, 723, 737, 742, 742, 748, 746, 730, 743, 724, 740],
  [808, 808, 805, 807, 806, 804, 806, 805, 802, 806, 800, 802],
  [857, 861, 846, 855, 850, 848, 850, 847, 839, 848, 825, 838],
  [918, 921, 914, 912, 914, 911, 916, 911, 902, 912, 896, 901],
  [978, 982, 973, 977, 982, 982, 974, 982, 976, 982, 982, 979],
  [1031, 1036, 1025, 1031, 1031, 1026, 1031, 1026, 1023, 1023, 1014, 1009],
];

const Sparklines = () => (
  <svg width={154} height={327} viewBox="0 0 154 327" fill="none">
    {SPARK_LINES.map((v, i) => {
      const y = Math.round((v - 70) / 3) + 0.5;
      return (
        <g key={v}>
          <path d={`M0 ${y}H154`} stroke="#c6c6c6" />
          {i < 17 && <path d={`M1 ${y + 4}H154`} stroke="#f2f2f2" />}
          {i > 0 && <path d={`M1 ${y - 2}H154`} stroke="#c4c4c4" strokeDasharray="2 1" />}
        </g>
      );
    })}
    <path d="M.5 0V326" stroke="#c6c6c6" />
    {SPARKS.map((s, i) => (
      <polyline key={i} points={s.map((v, k) => `${12.6 + k * 11.77},${(v - 69) / 3}`).join(" ")} stroke="#4e79a7" strokeWidth={2.500} strokeLinecap="round" strokeLinejoin="round" />
    ))}
  </svg>
);

/* ---------- show me cards ---------- */

const B1 = "#ccdae7", B2 = "#e2f0fb", O1 = "#fde5cc", G1 = "#cde7db", G2 = "#e1f3e9", O2 = "#fbdcc0", R1 = "#f8cfcf", R2 = "#fee1e1";
type R = [number, number, number, number, string];
const rects = (a: R[]) => a.map(([x, y, w, h, f], i) => <rect key={i} x={x} y={y} width={w} height={h} fill={f} />);
const line = (pts: string, c: string, w = 4) => <polyline key={pts} points={pts} fill="none" stroke={c} strokeWidth={w} />;
const ring = (x: number, y: number, c: string, r = 14) => <circle key={`${x}-${y}`} cx={x} cy={y} r={r} fill="none" stroke={c} strokeWidth={3} />;
const WORLD = [
  "M936 712L965 708 985 706 980 715 965 735 955 738 948 745 940 735Z",
  "M955 748L968 750 975 765 965 788 960 775Z",
  "M984 735L992 730 1005 735 1010 750 1003 775 996 765 992 752 984 748Z",
  "M986 725L992 712 1010 708 1052 714 1042 725 1036 745 1028 740 1020 748 1010 735 990 730Z",
  "M1042 768L1054 765 1055 775 1044 778Z",
];
const miniText = (t: string, x: number, y: number) => (
  <text key={t + x + y} x={x} y={y} fontSize={13} fill="#c8c8c8" fontFamily='"Liberation Sans", sans-serif' textLength={t.length * 6.500} lengthAdjust="spacingAndGlyphs">{t}</text>
);
const ticks = (x: number, y: number) => <path key={`t${x}`} d={`M${x} ${y}v94`} stroke="#ececec" strokeWidth={9} strokeDasharray="3 8.300" />;

const CARDS: React.ReactNode[] = [
  <>
    <rect x="940" y="485" width="113" height="104" fill="#fff" stroke="#e4e4e4" strokeWidth={2.500} />
    {rects([[941, 486, 111, 27, "#f4f4f4"], [941, 540, 111, 27, "#f4f4f4"], [945, 496, 12, 5, "#e2e2e2"], [945, 525, 14, 5, "#e2e2e2"], [945, 555, 10, 5, "#e2e2e2"]])}
    {miniText("1234", 971, 504)}{miniText("678", 1011, 504)}{miniText("368", 972, 531)}{miniText("3034", 1011, 531)}
    {miniText("2620", 971, 558)}{miniText("2558", 1011, 558)}{miniText("971", 972, 582)}{miniText("322", 1013, 582)}
  </>,
  rects([[1171, 486, 17, 21, G2], [1194, 486, 14, 18, O2], [1220, 486, 16, 21, G1], [1243, 486, 9, 12, G2], [1171, 525, 17, 20, G2], [1194, 525, 10, 12, O1], [1220, 525, 14, 18, G2], [1243, 525, 16, 20, G2], [1171, 561, 21, 27, G1], [1194, 561, 19, 24, G2], [1220, 561, 21, 27, G1], [1243, 561, 16, 21, G2], [1153, 495, 11, 5, "#ececec"], [1153, 525, 13, 6, "#ececec"], [1153, 555, 9, 6, "#ececec"]]),
  <>
    {rects([[1380, 486, 43, 28, G1], [1425, 486, 43, 28, G2], [1380, 516, 43, 28, O1], [1425, 516, 43, 28, G1], [1380, 546, 43, 28, G2], [1425, 546, 43, 28, G2], [1380, 576, 43, 13, G1], [1425, 576, 43, 13, G2], [1360, 496, 12, 5, "#e2e2e2"], [1360, 525, 14, 5, "#e2e2e2"], [1360, 555, 11, 5, "#e2e2e2"]])}
    <path d="M1355 485h113v104h-113zM1380 485v104M1424 485v104M1380 515h88M1380 545h88M1380 575h88" fill="none" stroke="#d4d9d6" strokeWidth={2} />
    {miniText("1234", 1384, 504)}{miniText("546", 1429, 504)}{miniText("368", 1384, 536)}{miniText("349", 1429, 536)}{miniText("2620", 1384, 565)}{miniText("53890", 1429, 565)}
  </>,
  <>
    {WORLD.map((d) => <path key={d} d={d} fill="#eee" />)}
    {[[940, 741, 5], [957, 730, 3.500], [989, 718, 4], [997, 730, 4], [1025, 736, 6], [1032, 744, 3], [1006, 748, 3], [957, 758, 3], [970, 764, 4], [1037, 755, 4], [1044, 772, 3], [984, 729, 3], [1036, 734, 3]].map(([x, y, r], i) => <ellipse key={i} cx={x} cy={y} rx={r * 0.85} ry={r} fill={i % 3 === 1 ? "#fad5d5" : "#ecb9c1"} />)}
  </>,
  <g transform="translate(208 0)">{WORLD.map((d, i) => <path key={d} d={d} fill={i === 2 || i === 3 ? R2 : R1} />)}</g>,
  <g transform="translate(1412.500 745) scale(.77 1)">
    <path d="M0 0L0 -44A44 44 0 0 0 -44 0Z" fill={R1} /><path d="M0 0L0 -44A44 44 0 0 1 31 -31Z" fill={R2} />
    <path d="M0 0L31 -31A44 44 0 0 1 31 31Z" fill={B1} /><path d="M0 0L31 31A44 44 0 0 1 -44 0Z" fill={B2} />
  </g>,
  rects([[150, 69, 72, 12, B1], [150, 93, 132, 12, B1], [150, 117, 36, 12, B1], [150, 141, 105, 12, B1]]),
  rects([[423, 69, 24, 21, B1], [423, 90, 24, 66, B2], [456, 87, 24, 24, B1], [456, 111, 24, 45, B2], [492, 78, 24, 57, B1], [492, 135, 24, 21, B2], [528, 99, 24, 27, B1], [528, 126, 24, 30, B2]]),
  rects([[687, 129, 12, 42, B1], [702, 102, 12, 69, B2], [744, 81, 12, 90, B1], [759, 114, 12, 57, B2], [798, 141, 12, 30, B1], [813, 99, 12, 72, B2], [729, 51, 3, 120, "#ededed"], [783, 51, 3, 120, "#ededed"]]),
  rects([[150, 273, 63, 45, "#d8e5f0"], [150, 321, 63, 42, B1], [216, 273, 33, 30, "#d8e5f0"], [252, 273, 30, 30, B2], [216, 306, 21, 30, R2], [216, 339, 21, 24, R1], [240, 306, 21, 30, "#d8e5f0"], [264, 306, 18, 30, B2], [240, 339, 21, 24, B2], [264, 339, 18, 12, B1], [264, 354, 18, 9, B2]]),
  <>
    {ring(435, 290, B2)}{ring(435, 303, B1)}{ring(435, 344, B1)}{ring(488, 291, B1)}{ring(488, 346, B2)}{ring(488, 333, B1)}{ring(541, 312, B2)}{ring(541, 290, B1 + "99")}{ring(541, 360, B2)}
    <path d="M475 381a14 14 0 0 1 27 0" fill="none" stroke={B2} strokeWidth={3} />
  </>,
  <>
    {ring(699, 285, B1, 10)}{ring(699, 300, B2, 10)}{ring(728, 297, B1, 10)}{ring(728, 333, B2, 10)}{ring(699, 355, B2, 10)}{ring(728, 361, B1, 10)}{ring(788, 286, B2, 10)}{ring(816, 298, B1, 10)}{ring(816, 312, B1, 10)}{ring(788, 343, B1, 10)}{ring(788, 356, B2, 10)}{ring(816, 349, B2, 10)}
    <rect x="756" y="258" width="3" height="120" fill="#ededed" />
  </>,
  <>{line("147,498 168,480 203,525 233,501 254,521 288,505", O1)}{line("147,515 168,525 203,498 254,537 288,530", "#fff0d8")}{line("145,538 168,561 218,535 254,558 288,550", B1)}</>,
  <>{line("414,514 437,518 455,498 477,499", O1)}{line("497,514 516,490 533,504 558,499", O1)}{line("414,534 437,530 457,509 475,521", "#fff0d8")}{line("497,533 516,525 533,533 558,520", "#fff0d8")}{line("414,556 437,562 455,544 477,544", B1)}{line("497,556 514,543 533,552 558,543", B1)}<rect x="486" y="465" width="3" height="120" fill="#ededed" /></>,
  <>{line("699,505 727,482 752,504 771,493 799,513 818,498", O1)}{line("699,532 727,520 752,550 771,540 799,555 818,531", B1)}{ticks(686, 477)}{ticks(829, 477)}</>,
  <><path d="M141 733L176 692 239 735 291 716V785H141Z" fill={B1} /><path d="M141 740L176 716 239 758 291 726V785H141Z" fill={O1} /><path d="M141 766L176 748 239 769 291 754V785H141Z" fill="#fff3e5" /></>,
  <>{[0, 78].map((o) => <g key={o} transform={`translate(${o} 0)`}><path d="M411 733L428 692 457 735 483 716V785H411Z" fill={B1} /><path d="M411 740L428 716 457 758 483 726V785H411Z" fill={O1} /><path d="M411 766L428 748 457 769 483 754V785H411Z" fill="#fff3e5" /></g>)}</>,
  <>{rects([[702, 735, 15, 51, B1], [726, 720, 15, 66, B1], [750, 747, 15, 39, B1], [774, 693, 15, 93, B1], [798, 732, 15, 54, B1]])}{line("705,725 732,700 758,738 783,711 810,735", O1)}{ticks(686, 684)}{ticks(829, 684)}</>,
  <>{ring(198, 912, O1, 10)}{ring(261, 918, O1, 10)}{ring(174, 942, O1, 10)}{ring(207, 954, O1, 10)}{ring(156, 978, O1, 10)}<path d={[[238, 898], [227, 931], [271, 949], [238, 967], [184, 970]].map(([x, y]) => plus(x, y, 13)).join("")} stroke={G1} strokeWidth={3} /></>,
  rects([[420, 981, 12, 9, G1], [435, 966, 12, 24, G1], [450, 939, 12, 51, G1], [465, 909, 12, 81, G1], [480, 897, 12, 93, G1], [495, 909, 12, 81, G1], [510, 939, 12, 51, G1], [525, 966, 12, 24, G1], [540, 981, 12, 9, G1]]),
  <>{rects([[693, 930, 21, 12, G2], [693, 942, 21, 24, G1], [729, 915, 21, 27, G2], [729, 942, 21, 15, G1], [765, 924, 21, 24, G2], [765, 948, 21, 24, G1], [801, 909, 21, 36, G2], [801, 945, 21, 15, G1]])}<path d="M696 907h15M703.500 907v69M696 976h15M732 901h15M739.500 901v81M732 982h15M768 898h15M775.500 898v87M768 985h15M804 892h15M811.500 892v96M804 988h15" stroke="#bdbdbd" strokeWidth={3} /></>,
  rects([[144, 1095, 27, 24, G1], [192, 1095, 12, 24, O2], [207, 1095, 12, 24, O1], [240, 1095, 6, 24, O2], [258, 1095, 24, 24, O1], [144, 1131, 18, 24, G2], [165, 1131, 9, 24, G1], [186, 1131, 12, 24, G1], [207, 1131, 42, 24, G2], [264, 1131, 24, 24, O2], [144, 1170, 6, 24, G1], [159, 1170, 24, 24, O1], [189, 1170, 6, 24, O2], [201, 1170, 12, 24, G2], [231, 1170, 21, 24, G1], [270, 1170, 12, 24, O1]]),
  rects([[417, 1098, 120, 24, "#f7f7f7"], [417, 1104, 75, 12, G1], [501, 1098, 3, 24, "#b8b8b8"], [417, 1134, 138, 24, "#f9f9f9"], [417, 1140, 120, 12, G1], [522, 1134, 3, 24, "#b8b8b8"], [417, 1170, 96, 24, "#f7f7f7"], [417, 1176, 63, 12, G1], [540, 1170, 3, 24, "#b8b8b8"]]),
  <>{([[718, 1166, 28, G2], [721, 1124, 10, G1], [750, 1117, 15, G1], [779, 1119, 9, G2], [808, 1133, 20, O1], [764, 1149, 16, O1], [792, 1164, 11, O2], [762, 1182, 12, G1]] as [number, number, number, string][]).map(([x, y, r, c]) => <circle key={x} cx={x} cy={y} r={r} fill={c} />)}</>,
];

const cardBox = (i: number) => {
  const c = i % 3;
  const r = Math.floor(i / 3);
  return r < 2 ? `${900 + c * 207.5} ${445 + r * 207} 191.400 186` : `${91 + c * 270} ${18 + (r - 2) * 207} 249 186`;
};

const ShowMePanel = () => (
  <ShowMe>
    <ShowMeTab>
      <svg width={14} height={15} viewBox="0 0 14 15">{rects([[0, 0, 11, 3, "#8a6a94"], [0, 4, 14, 3, "#7c9fc9"], [0, 8, 5, 3, "#f7a878"], [0, 12, 8, 3, "#f96a7c"]])}</svg>
      Show Me
    </ShowMeTab>
    <ShowMeBody>
      <CardGrid>
        {CARDS.map((n, i) => (
          <Card key={i}><svg width={83} height={62} viewBox={cardBox(i)} preserveAspectRatio="none">{n}</svg></Card>
        ))}
      </CardGrid>
      <SelectView>Select view</SelectView>
    </ShowMeBody>
  </ShowMe>
);

/* ---------- taskbar drawings ---------- */

const Chrome = () => (
  <>
    <circle cx="18" cy="18" r="17.500" fill="#fbc116" />
    <path d="M2.800 9.500A17.500 17.500 0 0 1 33.200 9.500H18A8.500 8.500 0 0 0 10.600 22.200Z" fill="#e33b2e" />
    <path d="M2.800 9.500A17.500 17.500 0 0 0 18 35.500L25.400 22.200A8.500 8.500 0 0 1 10.600 22.200Z" fill="#229342" />
    <circle cx="18" cy="18" r="8.500" fill="#fff" /><circle cx="18" cy="18" r="6.800" fill="#2f6fe4" />
  </>
);
const GRAY = "#7b7b7b", RED = "#c42b1c";
const A = ({ children }: { children: React.ReactNode }) => <svg width={36} height={36} viewBox="0 0 36 36">{children}</svg>;

const TaskApps = () => (
  <Apps>
    <AppSlot><A><defs><linearGradient id="tv" x2="1" y2="1"><stop offset="0" stopColor="#fff" /><stop offset="1" stopColor="#c9c9c9" /></linearGradient></defs><rect x="0" y="11" width="27" height="24" rx="1.500" fill="#262626" /><rect x="9" y="2" width="27" height="24" rx="1.500" fill="url(#tv)" /><path d="M9 11h18v15H9z" fill="#a3a3a3" /></A></AppSlot>
    <AppSlot><A><defs><linearGradient id="ch" x2="1" y2="1"><stop offset="0" stopColor="#8a6fc8" /><stop offset="1" stopColor="#4a53bb" /></linearGradient></defs><path d="M18 1a17 17 0 1 1-8 32L1 35l2.500-8A17 17 0 0 1 18 1z" fill="url(#ch)" /><rect x="8" y="11" width="14" height="14" rx="2.500" fill="#fff" /><path d="M23 16l5-4v12l-5-4z" fill="#fff" /></A></AppSlot>
    <AppSlot><A><path d="M0 6h13l3-1h20v29H0z" fill="#fcca3d" /><path d="M0 2h13l1.500 3L12 8H0z" fill="#e0a108" /><path d="M6 34v-6a4 4 0 0 1 4-4h16a4 4 0 0 1 4 4v6z" fill="#1078cf" /><path d="M10 29h15" stroke="#064f92" strokeWidth="2" /></A><Pip $c={GRAY} /></AppSlot>
    <AppSlot><A><rect x="1" y="1" width="34" height="34" rx="3" fill="#2b6489" /><path d="M6 6c7 0 11 4 14 11 2 5 5 7 8 9l-4 1 4 4M6 6c0 5 0 11 2 17 1 2 2 3 3 1l1-5c3 2 4 6 6 9" fill="none" stroke="#fff" strokeWidth="1.300" /><path d="M26 5l0 3 3 1 2-2M29 8l4 4" stroke="#fff" strokeWidth="2" fill="none" /></A></AppSlot>
    <AppSlot><A><Chrome /><circle cx="33" cy="5" r="12" fill="#8b8678" /><path d="M25 0c4-4 10-6 13-4l-2 8-6 10-6-3z" fill="#5b6a70" /><path d="M35-5c5 1 8 6 8 10l-5 8-5-3 4-7z" fill="#3a3230" /><circle cx="31" cy="8" r="3" fill="#c8a17c" /></A><Pip $c={GRAY} /></AppSlot>
    <AppSlot $bg="#fbe3e4"><A><circle cx="12" cy="12" r="10.500" fill="#00a9ee" /><circle cx="24" cy="25" r="10" fill="#00a9ee" /><circle cx="18" cy="18" r="15" fill="#00a9ee" /><circle cx="18" cy="18" r="12.500" fill="#fff" /><path d="M24 12c-3-4-12-3-12 1.500 0 5 12 3.500 12 9 0 5-10 5.500-12.500.5" fill="none" stroke="#00a9ee" strokeWidth="4" strokeLinecap="round" /><circle cx="35" cy="8" r="7.500" fill="#e81123" /><path d="M32 5l6 6M38 5l-6 6" stroke="#fff" strokeWidth="2" /></A><Pip $c={RED} /></AppSlot>
    <AppSlot $bg="#fbe3e4"><A><defs><linearGradient id="eg" x2="1" y2=".4"><stop offset="0" stopColor="#1d9de0" /><stop offset="1" stopColor="#58dd61" /></linearGradient></defs><path d="M0 16C2-4 34-5 36 14c0 8-9 12-15 8 4-5 1-11-5-11C9 11 2 13 0 20z" fill="url(#eg)" /><path d="M0 18c1-7 7-11 14-9 5 1 7 4 7 6-9-1-8 10 0 13 6 2 10 0 12-1C26 39 0 39 0 18z" fill="#0c70c8" /><path d="M13 17c-4 10 5 21 20 10-6 3-18 0-16-10z" fill="#0f4d97" /></A><Pip $c={RED} /></AppSlot>
    <AppSlot><A><Chrome /><circle cx="31" cy="5" r="12.500" fill="#1414ff" /></A><Pip $c={GRAY} /></AppSlot>
    <AppSlot><A><rect x="8" y="2" width="28" height="32" rx="2" fill="#2b7cd3" /><path d="M8 4a2 2 0 0 1 2-2h24a2 2 0 0 1 2 2v6H8z" fill="#41a5ee" /><path d="M8 18h28v8H8z" fill="#185abd" /><path d="M8 26h28v6a2 2 0 0 1-2 2H10a2 2 0 0 1-2-2z" fill="#103f91" /><rect x="0" y="9" width="18" height="18" rx="2" fill="#185abd" /><text x="9" y="23" fill="#fff" fontSize="14" fontWeight="700" textAnchor="middle" fontFamily="Open Sans, sans-serif">W</text></A><Pip $c={GRAY} /></AppSlot>
    <AppSlot $bg="#efefef"><A><rect x="1" y="1" width="34" height="34" fill="#fff" stroke="#ddd" /><svg x="3" y="3" width="30" height="30" viewBox="0 0 24 24"><path d={plus(12, 12, 4) + plus(6, 6.500, 2.800) + plus(18, 6.500, 2.800) + plus(6, 17.500, 2.800) + plus(18, 17.500, 2.800) + plus(12, 2.400, 2) + plus(12, 21.600, 2) + plus(2.200, 12, 1.900) + plus(21.800, 12, 1.900)} stroke="#33759c" strokeWidth="1.200" /></svg></A><Pip $c="#0078d7" $w={24} /></AppSlot>
    <AppSlot><A><ellipse cx="18" cy="18" rx="17" ry="17.500" fill="#e3141f" /><path d="M24 3a17 17.500 0 0 1 0 30 17 22 0 0 0 0-30z" fill="#f24a4a" /><ellipse cx="18" cy="18" rx="7.800" ry="13" fill="#dadada" /></A><Pip $c={GRAY} /></AppSlot>
  </Apps>
);

const T = (p: { w: number; h: number; children: React.ReactNode; sw?: number }) => (
  <svg width={p.w} height={p.h} viewBox={`0 0 ${p.w} ${p.h}`} fill="none" stroke="#1b1b1b" strokeWidth={p.sw ?? 1.500}>{p.children}</svg>
);

const TaskTray = () => (
  <Tray>
    <TrayIcon $w={32}><T w={16} h={10}><path d="M1 9l7-7 7 7" /></T></TrayIcon>
    <TrayIcon $w={62}><T w={26} h={22}><path d="M5 17a5 5 0 0 1 1-9.500C8 1 17 1 18.500 8c5 0 6 6 3 8.500z" fill="#9c9c9c" strokeWidth={1.300} /><circle cx="18" cy="15" r="6.500" fill="#fff" stroke="none" /><path d="M13.500 15a4.500 4.500 0 0 1 8-2.500M22.500 15a4.500 4.500 0 0 1-8 2.500" stroke="#1f77c0" /></T></TrayIcon>
    <TrayIcon $w={34}><T w={25} h={18}><rect x="1" y="1" width="23" height="15.500" rx="2" /><path d="M4.500 5.500h16M4.500 9h16" strokeDasharray="2 2" strokeWidth={2} /><path d="M7.500 12.800h10" /></T></TrayIcon>
    <TrayText $w={80}>ENG<br />IN</TrayText>
    <TrayIcon $w={34}><T w={24} h={20}><path d="M1 8a15 15 0 0 1 22 0" stroke="#ababab" /><path d="M4.500 11a10.500 10.500 0 0 1 15 0M8 14.300a5.500 5.500 0 0 1 8 0" /><circle cx="12" cy="17" r="1.800" fill="#1b1b1b" stroke="none" /></T></TrayIcon>
    <TrayIcon $w={36}><T w={24} h={20}><path d="M1.500 7.500v5h3.500l4.500 4V3.500L5 7.500zM13 7.500a4 4 0 0 1 0 5M16 4.500a8 8 0 0 1 0 11" /><path d="M19 2a12 12 0 0 1 0 16" stroke="#ababab" /></T></TrayIcon>
    <TrayIcon $w={38}><T w={24} h={16}><rect x="1" y="1.500" width="20" height="12.500" rx="2.500" /><rect x="3.500" y="4" width="15" height="7.500" rx="1" fill="#1b1b1b" stroke="none" /><path d="M22.500 6v4" strokeWidth={2} /></T></TrayIcon>
    <TrayText $w={111} $right>14:43<br />19-10-2023</TrayText>
    <Count>2</Count>
  </Tray>
);

const NewTab = ({ d }: { d: string }) => (
  <svg width={16} height={18} viewBox="0 0 16 18" fill="none" stroke="#777" strokeWidth={1.200}><path d={d} /><path d="M8 13h8M12 9v8" stroke="#444" strokeWidth={1.800} /></svg>
);

const NavArrows = styled.svg`
  margin-left: 1px;
`;
const ViewModes = styled.svg`
  margin-left: 3px;
`;

const EAST_COLS = "120px 139px 143px 132px";
const WEST_COLS = "120px 143px 143px 144px";

export default function App() {
  return (
    <Screen>
      <Global />
      <TitleBar>
        <AppBadge><TableauMark size={19} mono /></AppBadge>
        <WindowTitle>Tableau Public - Superstore Dashboard</WindowTitle>
        <WindowButtons>
          <svg width={16} height={16} viewBox="0 0 16 16" stroke="#000"><path d="M1 8h14.500" strokeWidth={1.200} /></svg>
          <svg width={16} height={16} viewBox="0 0 16 16" fill="none" stroke="#000" strokeWidth={1.300}><rect x="1" y="4" width="11" height="11" rx="2" /><path d="M4.500 1.200H12a3 3 0 0 1 3 3V12" /></svg>
          <svg width={16} height={16} viewBox="0 0 16 16" stroke="#000" strokeWidth={1.300}><path d="M1 1l14 14M15 1L1 15" /></svg>
        </WindowButtons>
      </TitleBar>
      <MenuBar>
        <MenuItem $w={42}>File</MenuItem><MenuItem $w={53}>Data</MenuItem><MenuItem $w={100}>Worksheet</MenuItem>
        <MenuItem $w={103}>Dashboard</MenuItem><MenuItem $w={58}>Story</MenuItem><MenuItem $w={80}>Analysis</MenuItem>
        <MenuItem $w={52}>Map</MenuItem><MenuItem $w={73}>Format</MenuItem><MenuItem $w={65}>Server</MenuItem>
        <MenuItem $w={82}>Window</MenuItem><MenuItem $w={50}>Help</MenuItem>
      </MenuBar>
      <ToolbarRow />
      <Workspace>
        <Side />
        <Dashboard>
          <TopZone>
            <Filter>
              <FilterTitle>Region</FilterTitle>
              <FilterBody>
                <FilterList>
                  {["(All)", "Central", "East", "South"].map((r) => (
                    <FilterRow key={r}>
                      <Box $on={r === "East"}>
                        {r === "East" && <svg width={10} height={10} viewBox="0 0 10 10" fill="none" stroke="#555" strokeWidth={1.800}><path d="M1 5l2.500 3.500L8 1" /></svg>}
                      </Box>
                      {r}
                    </FilterRow>
                  ))}
                </FilterList>
                <VTrack $w={25} $top={26} $len={27} />
              </FilterBody>
            </Filter>
            <DashTitle>Comparison of Region<br />Based on Sales</DashTitle>
          </TopZone>
          <MiddleZone>
            <KpiPanel $w={221} $pl={2} $top={1}>
              <KpiTitle $pl={4} $ls={0.850} $mb={10}>Primanry Region-<br />East</KpiTitle>
              <KpiTable $w={207} $clipped>
                {KPI_EAST.map(([k, v]) => <KpiRow key={k} $over={5}><b>{k}</b>{v}</KpiRow>)}
              </KpiTable>
              <HTrack $w={207} $left={26} $len={145} />
            </KpiPanel>
            <MapPanel $w={515} $top={0}>
              <MapTitle $pl={4} $ls={1} $mb={13}>Primary East Region</MapTitle>
              <MapFrame $h={236}><EastMap /><Attribution>© 2023 Mapbox © OpenStreetMap</Attribution></MapFrame>
            </MapPanel>
            <KpiPanel $w={218} $pl={25} $top={13}>
              <KpiTitle $pl={4} $ls={0.800} $mb={10}>Secoundary<br />Region-West</KpiTitle>
              <KpiTable $w={161}>
                {KPI_WEST.map(([k, v], i) => <KpiRow key={i} $over={-5}><b>{k}</b>{v}</KpiRow>)}
              </KpiTable>
            </KpiPanel>
            <MapPanel $w={401} $top={11}>
              <MapTitle $pl={4} $ls={0.800} $mb={13}>Secondary West Region</MapTitle>
              <MapFrame $h={226}><WestMap /><Attribution>© 2023 Mapbox © OpenStreetMap</Attribution></MapFrame>
            </MapPanel>
          </MiddleZone>
          <BottomZone>
            <DataPanel $w={555} $ml={13} $top={24}>
              <HeadRow $cols={EAST_COLS} $h={21}>
                <HeadCell>Sub-Catego..</HeadCell><HeadCell $num>Sales</HeadCell><HeadCell $num>Min sales</HeadCell><HeadCell $num $pr={4}>Max Sales</HeadCell>
              </HeadRow>
              <DataBody $h={271}>
                <Rows $w={530} $edge>
                  {EAST_ROWS.map((r) => (
                    <DataRow key={r[0]} $cols={EAST_COLS}><Name>{r[0]}</Name><Num>{r[1]}</Num><Num>{r[2]}</Num><Num>{r[3]}</Num></DataRow>
                  ))}
                </Rows>
                <VTrack $w={24} $top={26} $len={143} />
              </DataBody>
              <FootLine $w={120} />
              <HTrack $w={410} $ml={120} $left={26} $len={344} />
            </DataPanel>
            <DataPanel $w={154} $ml={12} $top={13}><Sparklines /></DataPanel>
            <DataPanel $w={576} $ml={25} $top={20}>
              <HeadRow $cols={WEST_COLS} $h={20}>
                <HeadCell>Sub-Catego..</HeadCell><HeadCell $num $pr={4}>Sales</HeadCell><HeadCell $num $on $pr={4}>Min sales</HeadCell><HeadCell $num $pr={5}>Max Sales</HeadCell>
              </HeadRow>
              <DataBody $h={293}>
                <Rows $w={550}>
                  {WEST_ROWS.map((r) => (
                    <DataRow key={r[0]} $cols={WEST_COLS}><Name>{r[0]}</Name><Num $dim $pr={3}>{r[1]}</Num><Num $on $pr={3}>{r[2]}</Num><Num $dim $pr={4}>{r[3]}</Num></DataRow>
                  ))}
                </Rows>
                <VTrack $w={24} $top={26} $len={166} />
              </DataBody>
              <FootLine $w={120} />
            </DataPanel>
          </BottomZone>
        </Dashboard>
      </Workspace>
      <TabStrip>
        <SheetTab $w={196} $pl={13}>
          <svg width={9} height={12} viewBox="0 0 9 12" fill="none" stroke="#666"><rect x=".5" y=".5" width="8" height="11" rx="2" /><path d="M.5 4h8" /></svg>
          Data Source
        </SheetTab>
        <SheetTab $w={16} $pl={0}><ScrolledLabel>2</ScrolledLabel></SheetTab>
        <SheetTab $w={145} $pl={8}>Secondary WR</SheetTab>
        <SheetTab $w={300} $pl={8}>sab category sales by month(ea...</SheetTab>
        <SheetTab $w={300} $pl={8}>sab category sales by month(we...</SheetTab>
        <SheetTab $w={198} $pl={8}>Primany Region-east</SheetTab>
        <SheetTab $w={209} $pl={8}>Seconary Region west</SheetTab>
        <SheetTab $w={93} $pl={8}>Sheet 18</SheetTab>
        <SheetTab $w={123} $pl={8}>Sheet 18 (2)</SheetTab>
        <SheetTab $w={147} $pl={9} $active $ls={-0.150}>
          <svg width={12} height={12} viewBox="0 0 12 12" fill="none" stroke="#555"><path d="M.5 .5h11v11H.5zM6 .5v11M.5 6h11" /></svg>
          Dashboard 5
        </SheetTab>
        <SheetTab $w={97} $pl={9}>
          <svg width={12} height={12} viewBox="0 0 12 12" fill="none" stroke="#666"><path d="M6 12L.5 10V0L6 2l5.500-2v10zM6 2v10" /></svg>
          Story 1
        </SheetTab>
        <SheetTab $w={32} $pl={9}><NewTab d="M8 12H1V2h11v6M4 10V7M6.500 10V5M9 8V6" /></SheetTab>
        <SheetTab $w={32} $pl={9}><NewTab d="M8 12H1V2h11v6M6.500 2v10M1 7h11" /></SheetTab>
        <SheetTab $w={32} $pl={8}><NewTab d="M5 12L1 10V2l5 1 5-1v6M6 3v6" /></SheetTab>
      </TabStrip>
      <StatusBar>
        <StatusCell $w={189}>
          <svg width={12} height={16} viewBox="0 0 12 16" fill="none" stroke="#555"><ellipse cx="6" cy="4" rx="2.800" ry="3.200" /><path d="M1 14.500c0-7 10-7 10 0z" /></svg>
          <UserName>Madhaviben Ka...</UserName>
          <Caret c="#000" w={8} />
        </StatusCell>
        <StatusCell $w={39} /><StatusCell $w={39} /><StatusCell $w={69} />
        <StatusCell $w={73}>
          <NavArrows width={56} height={9} viewBox="0 0 56 9" fill="#555"><path d="M1 0h1.500v9H1zM7 0v9L3 4.500zM22 0v9L18 4.500zM34 0v9l4-4.500zM49 0v9l4-4.500zM54 0h1.500v9H54z" /></NavArrows>
        </StatusCell>
        <StatusCell $w={75}>
          <ViewModes width={60} height={12} viewBox="0 0 60 12" fill="#c0c0c0"><path d="M0 0h3v3H0zM4.500 0h3v3h-3zM9 0h3v3H9zM0 4.500h3v3H0zM4.500 4.500h3v3h-3zM9 4.500h3v3H9zM0 9h3v3H0zM4.500 9h3v3h-3zM9 9h3v3H9zM23 0h12v7.500H23zM23 9h3v3h-3zM27.500 9h3v3h-3zM32 9h3v3h-3z" /><path d="M47 0h11v12H47z" fill="#666" /></ViewModes>
        </StatusCell>
      </StatusBar>
      <Taskbar>
        <Widget>
          <svg width={36} height={36} viewBox="0 0 36 36"><circle cx="18" cy="18" r="18" fill="#5a1fa5" /><path d="M13.500 7h9v7c0 5-1 7-3 9v5h3v2.500h-9V28h3v-5c-2-2-3-4-3-9z" fill="#e9bf7d" /><path d="M16.500 9h1.500v18h-1.500z" fill="#fff3df" opacity=".6" /><ellipse cx="18" cy="8" rx="4.500" ry="3" fill="#f7e3cc" /><path d="M10 11c-4 6-3 11 1.500 15M26 11c4 6 3 11-1.500 15" fill="none" stroke="#d9a566" strokeWidth="1.800" /></svg>
          <div>IND - BAN<Live>Live</Live></div>
        </Widget>
        <svg width={35} height={35} viewBox="0 0 35 35"><defs><linearGradient id="wn" x2="1" y2="1"><stop offset="0" stopColor="#4fd0ff" /><stop offset="1" stopColor="#0071d4" /></linearGradient></defs><path d="M1 0h16v17H0V1zM18 0h16l1 1v16H18zM0 18h17v17H1l-1-1zM18 18h17v16l-1 1H18z" fill="url(#wn)" /></svg>
        <SearchBox>
          <svg width={23} height={23} viewBox="0 0 23 23" fill="none" stroke="#222" strokeWidth={2.200}><circle cx="9.500" cy="9.500" r="8" /><path d="M15.500 15.500L22 22" strokeWidth={2.800} /></svg>
          Search
        </SearchBox>
        <TaskApps />
        <TaskTray />
      </Taskbar>
      <ShowMePanel />
    </Screen>
  );
}
